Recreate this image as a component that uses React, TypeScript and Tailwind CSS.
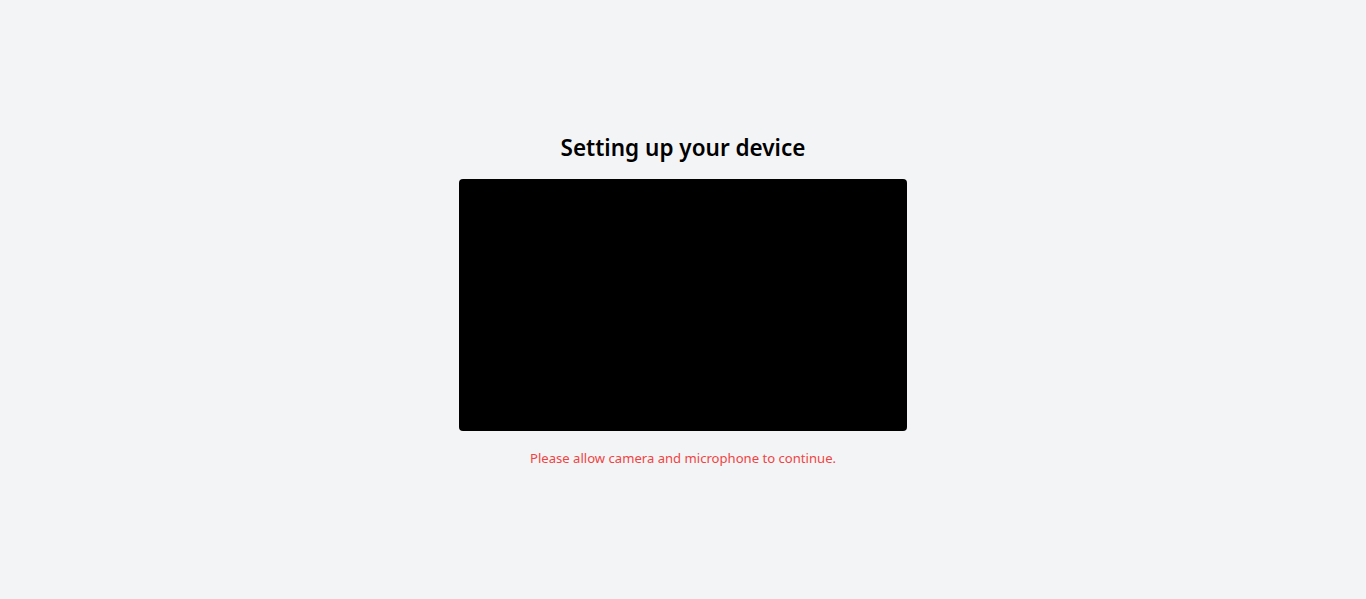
export default function App() {
  return (
    <div
      className="min-h-screen bg-[#f3f4f6] flex flex-col items-center justify-center"
      style={{ fontFamily: '"Segoe UI", "Noto Sans", "Open Sans", sans-serif' }}
    >
      <h1 className="text-[22.5px] leading-8 font-semibold text-black mb-[15px]">Setting up your device</h1>
      <div className="w-[448px] h-[252px] bg-black rounded" />
      <p className="mt-[17px] text-[13.1px] leading-5 text-[#ef4444]">
        Please allow camera and microphone to continue.
      </p>
    </div>
  );
}
